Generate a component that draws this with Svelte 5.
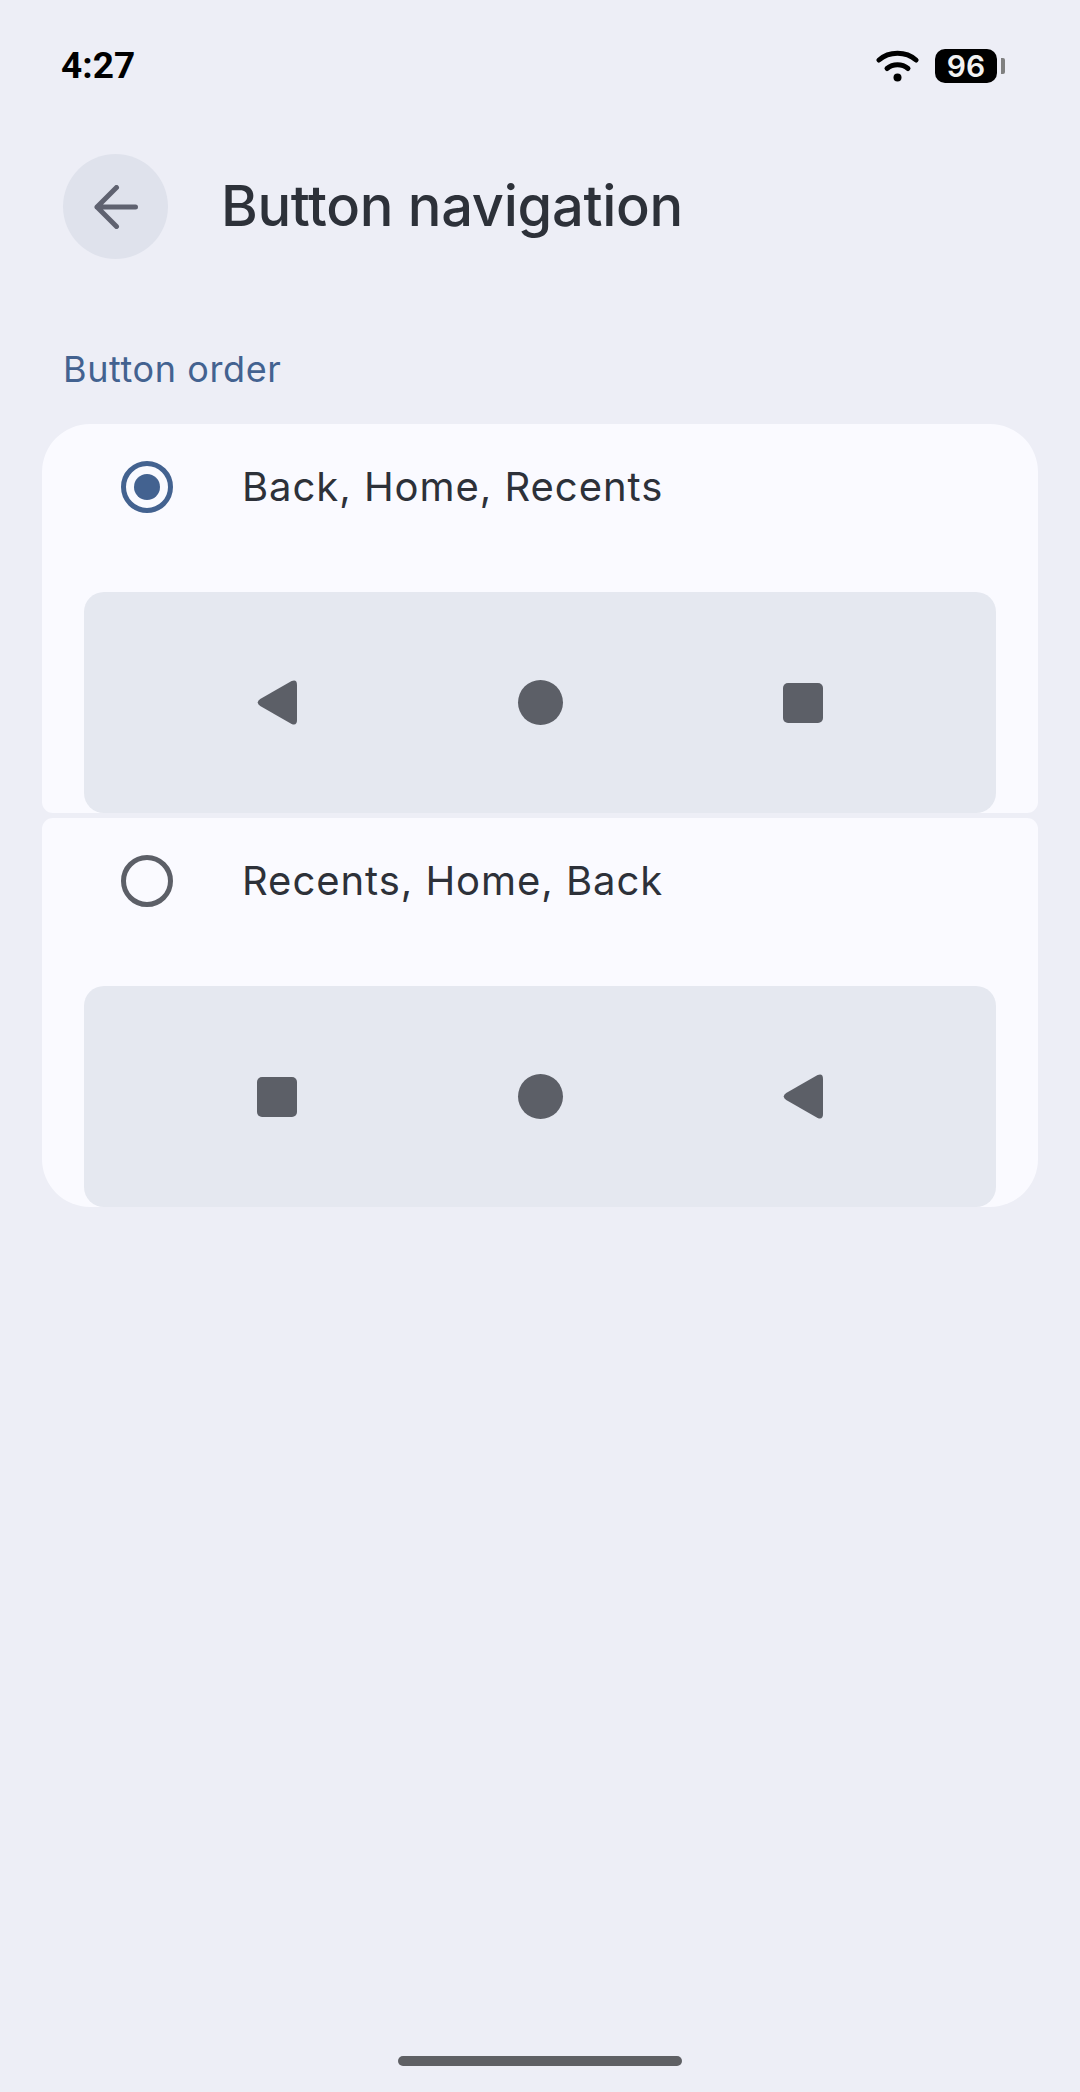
<script>
  const tri = 'M3.2 18.9 L34.6 1.1 Q40 -1 40 5 L40 40 Q40 46 34.6 43.9 L3.2 26.1 Q-1.8 22.5 3.2 18.9 Z';
  const options = [
    { label: 'Back, Home, Recents', selected: true, cls: 'first', icons: ['back', 'home', 'recents'] },
    { label: 'Recents, Home, Back', selected: false, cls: 'last', icons: ['recents', 'home', 'back'] }
  ];
</script>

{#snippet navIcon(kind)}
  <span class="slot">
    {#if kind === 'back'}
      <svg width="40" height="45" viewBox="0 0 40 45"><path d={tri} fill="#5c5f67" /></svg>
    {:else if kind === 'home'}
      <span class="dot"></span>
    {:else}
      <span class="sq"></span>
    {/if}
  </span>
{/snippet}

<div class="page">
  <div class="status">
    <span class="time">4:27</span>
    <div class="status-right">
      <svg class="wifi" width="43" height="32" viewBox="0 0 43 32" fill="none" stroke="#000" stroke-width="5" stroke-linecap="round">
        <path d="M3 10 C13 1 30 1 40 10" />
        <path d="M11 18.5 C17 13.5 26 13.5 32 18.5" />
        <circle cx="21.5" cy="27.5" r="4" fill="#000" stroke="none" />
      </svg>
      <div class="battery"><span>96</span></div>
      <div class="nub"></div>
    </div>
  </div>

  <div class="header">
    <div class="back">
      <svg width="44" height="44" viewBox="0 0 44 44" fill="none" stroke="#5f6270" stroke-width="5" stroke-linecap="round" stroke-linejoin="round">
        <path d="M41.5 22 H3 M22.5 2.5 L3 22 L22.5 41.5" />
      </svg>
    </div>
    <h1>Button navigation</h1>
  </div>

  <div class="section">Button order</div>

  <div class="cards">
    {#each options as o}
      <div class="card {o.cls}">
        <div class="row">
          <span class="radio" class:on={o.selected}></span>
          <span class="label">{o.label}</span>
        </div>
        <div class="panel">
          {#each o.icons as k}
            {@render navIcon(k)}
          {/each}
        </div>
      </div>
    {/each}
  </div>

  <div class="home-bar"></div>
</div>

<style>
  :global(body) { margin: 0; background: #edeef6; }
  .page {
    width: 1080px;
    height: 2092px;
    box-sizing: border-box;
    display: flex;
    flex-direction: column;
    font-family: Inter, "Noto Sans", sans-serif;
    color: #2d3139;
    background: #edeef6;
    overflow: hidden;
  }
  .status {
    height: 50px;
    margin-top: 41px;
    padding: 0 75px 0 61px;
    display: flex;
    align-items: center;
    justify-content: space-between;
  }
  .time { font-family: Roboto, sans-serif; font-weight: 700; font-size: 37px; color: #000; line-height: 1; position: relative; top: -1px; }
  .status-right { display: flex; align-items: center; }
  .wifi { margin-right: 16px; }
  .battery {
    width: 62px; height: 34px; border-radius: 10px; background: #000;
    display: flex; align-items: center; justify-content: center;
    color: #f2f2f2; font-family: Inter, sans-serif; font-weight: 600; font-size: 30px; line-height: 1;
  }
  .nub { width: 4px; height: 16px; margin-left: 4px; background: #808080; border-radius: 0 2px 2px 0; }
  .header {
    margin-top: 63px;
    padding-left: 63px;
    display: flex;
    align-items: center;
  }
  .back {
    width: 105px; height: 105px; border-radius: 50%; background: #dfe2ec;
    display: flex; align-items: center; justify-content: center;
  }
  h1 { margin: 0 0 0 53px; font-weight: 450; font-size: 56px; line-height: 105px; color: #2d3139; letter-spacing: -0.3px; }
  .section { margin: 88px 0 0 63px; font-size: 36px; line-height: 44px; color: #436290; letter-spacing: 0.6px; }
  .cards { margin: 33px 42px 0; display: flex; flex-direction: column; gap: 5px; }
  .card { background: #fafaff; border-radius: 11px; height: 389px; box-sizing: border-box; padding: 0 42px; }
  .card.first { border-top-left-radius: 48px; border-top-right-radius: 48px; }
  .card.last { border-bottom-left-radius: 48px; border-bottom-right-radius: 48px; }
  .row { height: 168px; box-sizing: border-box; padding: 37px 0 0 37px; display: flex; align-items: flex-start; }
  .radio {
    width: 52px; height: 52px; box-sizing: border-box; border-radius: 50%;
    border: 5px solid #5c5f67; display: flex; align-items: center; justify-content: center; flex: none;
  }
  .radio.on { border-color: #436290; }
  .radio.on::after { content: ""; width: 26px; height: 26px; border-radius: 50%; background: #436290; }
  .label { margin-left: 69px; font-size: 40px; font-weight: 430; line-height: 52px; color: #2d3139; letter-spacing: 0.95px; }
  .panel {
    height: 221px; border-radius: 20px; background: #e5e8f0;
    display: grid; grid-template-columns: repeat(3, 263px); justify-content: center; align-items: center; justify-items: center;
  }
  .slot { width: 40px; height: 45px; display: flex; align-items: center; justify-content: center; }
  .slot svg { display: block; }
  .dot { width: 45px; height: 45px; border-radius: 50%; background: #5c5f67; flex: none; }
  .sq { width: 40px; height: 40px; border-radius: 5px; background: #5c5f67; flex: none; }
  .home-bar { margin: auto auto 26px; width: 284px; height: 10px; border-radius: 5px; background: #5f6064; }
</style>
